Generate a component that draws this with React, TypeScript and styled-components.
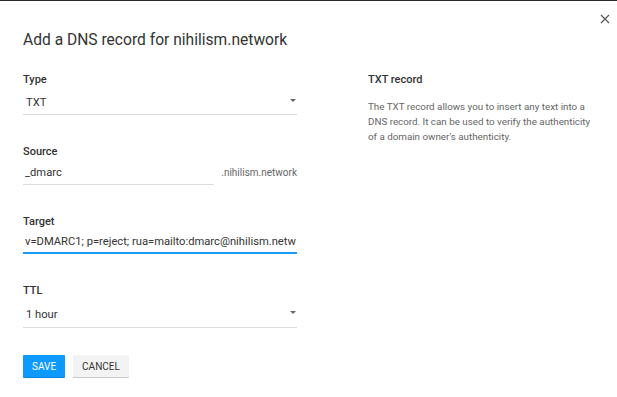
import styled, { createGlobalStyle } from 'styled-components'

const GlobalStyle = createGlobalStyle`
  html, body {
    margin: 0;
    padding: 0;
    background: #fff;
    font-family: Roboto, 'Liberation Sans', Arial, sans-serif;
  }
`

const Dialog = styled.div`
  position: relative;
  box-sizing: border-box;
  width: 617px;
  height: 397px;
  border-top: 1px solid #2b2b2b;
  padding: 29px 0 0 23px;
  background: #fff;
`

const CloseButton = styled.button`
  position: absolute;
  top: 12px;
  right: 6px;
  width: 12px;
  height: 12px;
  padding: 0;
  border: none;
  background: none;
  display: flex;
  align-items: center;
  justify-content: center;
  cursor: pointer;
`

const Title = styled.h2`
  margin: 0;
  font-size: 15.6px;
  line-height: 20px;
  font-weight: 400;
  color: #333;
`

const Columns = styled.div`
  display: grid;
  grid-template-columns: 274px 228px;
  column-gap: 71px;
  margin-top: 23px;
`

const LeftColumn = styled.div`
  display: flex;
  flex-direction: column;
`

const Fields = styled.div`
  display: flex;
  flex-direction: column;
  gap: 30px;
`

const Field = styled.div`
  display: flex;
  flex-direction: column;
`

const Label = styled.label`
  font-size: 11px;
  line-height: 14px;
  font-weight: 500;
  color: #333;
`

const Row = styled.div`
  display: flex;
  align-items: flex-start;
`

const Control = styled.div<{ $pt: number; $pb: number; $focused?: boolean; $width?: number }>`
  display: flex;
  align-items: flex-start;
  box-sizing: border-box;
  width: ${(p) => (p.$width ? `${p.$width}px` : '100%')};
  padding: ${(p) => `${p.$pt}px 1px ${p.$pb}px 2px`};
  border-bottom: ${(p) => (p.$focused ? '2px solid #1a9bf5' : '1px solid #dcdcdc')};
`

const Input = styled.input`
  flex: 1;
  min-width: 0;
  height: 16px;
  padding: 0;
  border: none;
  outline: none;
  background: transparent;
  font-family: inherit;
  font-size: 11.2px;
  line-height: 16px;
  color: #333;
`

const Value = styled.span`
  flex: 1;
  padding-left: 1px;
  font-size: 11.2px;
  line-height: 16px;
  color: #333;
`

const Caret = styled.span`
  margin-top: 4px;
  width: 0;
  height: 0;
  border-left: 3px solid transparent;
  border-right: 3px solid transparent;
  border-top: 3px solid #666;
`

const Suffix = styled.span`
  margin: 6px 0 0 7px;
  font-size: 10px;
  line-height: 16px;
  color: #666;
  white-space: nowrap;
`

const Actions = styled.div`
  display: flex;
  gap: 8px;
  margin-top: 27px;
`

const Button = styled.button<{ $primary?: boolean }>`
  height: 22px;
  padding: 0 9px;
  border: none;
  border-radius: 1px;
  font-family: inherit;
  font-size: 10px;
  font-weight: 400;
  text-transform: uppercase;
  background: ${(p) => (p.$primary ? '#0c9aff' : '#f3f3f3')};
  color: ${(p) => (p.$primary ? '#fff' : '#333')};
  box-shadow: ${(p) => (p.$primary ? '0 1px 0 #0a84db' : '0 1px 0 #c9c9c9')};
  cursor: pointer;
`

const Help = styled.div`
  display: flex;
  flex-direction: column;
`

const HelpTitle = styled.div`
  font-size: 11px;
  line-height: 14px;
  font-weight: 500;
  color: #333;
`

const HelpText = styled.p`
  margin: 12px 0 0;
  font-size: 9.8px;
  line-height: 15px;
  color: #666;
`

export default function App() {
  return (
    <>
      <GlobalStyle />
      <Dialog>
        <CloseButton aria-label="Close">
          <svg width="10" height="10" viewBox="0 0 10 10">
            <path d="M1 1 L9 9 M9 1 L1 9" stroke="#555" strokeWidth="1.2" />
          </svg>
        </CloseButton>

        <Title>Add a DNS record for nihilism.network</Title>

        <Columns>
          <LeftColumn>
            <Fields>
              <Field>
                <Label>Type</Label>
                <Control $pt={8} $pb={3}>
                  <Value>TXT</Value>
                  <Caret />
                </Control>
              </Field>

              <Field>
                <Label>Source</Label>
                <Row>
                  <Control $pt={6} $pb={3} $width={192}>
                    <Input readOnly value="_dmarc" />
                  </Control>
                  <Suffix>.nihilism.network</Suffix>
                </Row>
              </Field>

              <Field>
                <Label>Target</Label>
                <Control $pt={5} $pb={2} $focused>
                  <Input readOnly value="v=DMARC1; p=reject; rua=mailto:dmarc@nihilism.network" />
                </Control>
              </Field>

              <Field>
                <Label>TTL</Label>
                <Control $pt={9} $pb={4}>
                  <Value>1 hour</Value>
                  <Caret />
                </Control>
              </Field>
            </Fields>

            <Actions>
              <Button $primary>Save</Button>
              <Button>Cancel</Button>
            </Actions>
          </LeftColumn>

          <Help>
            <HelpTitle>TXT record</HelpTitle>
            <HelpText>
              The TXT record allows you to insert any text into a DNS record. It can be used to
              verify the authenticity of a domain owner's authenticity.
            </HelpText>
          </Help>
        </Columns>
      </Dialog>
    </>
  )
}
